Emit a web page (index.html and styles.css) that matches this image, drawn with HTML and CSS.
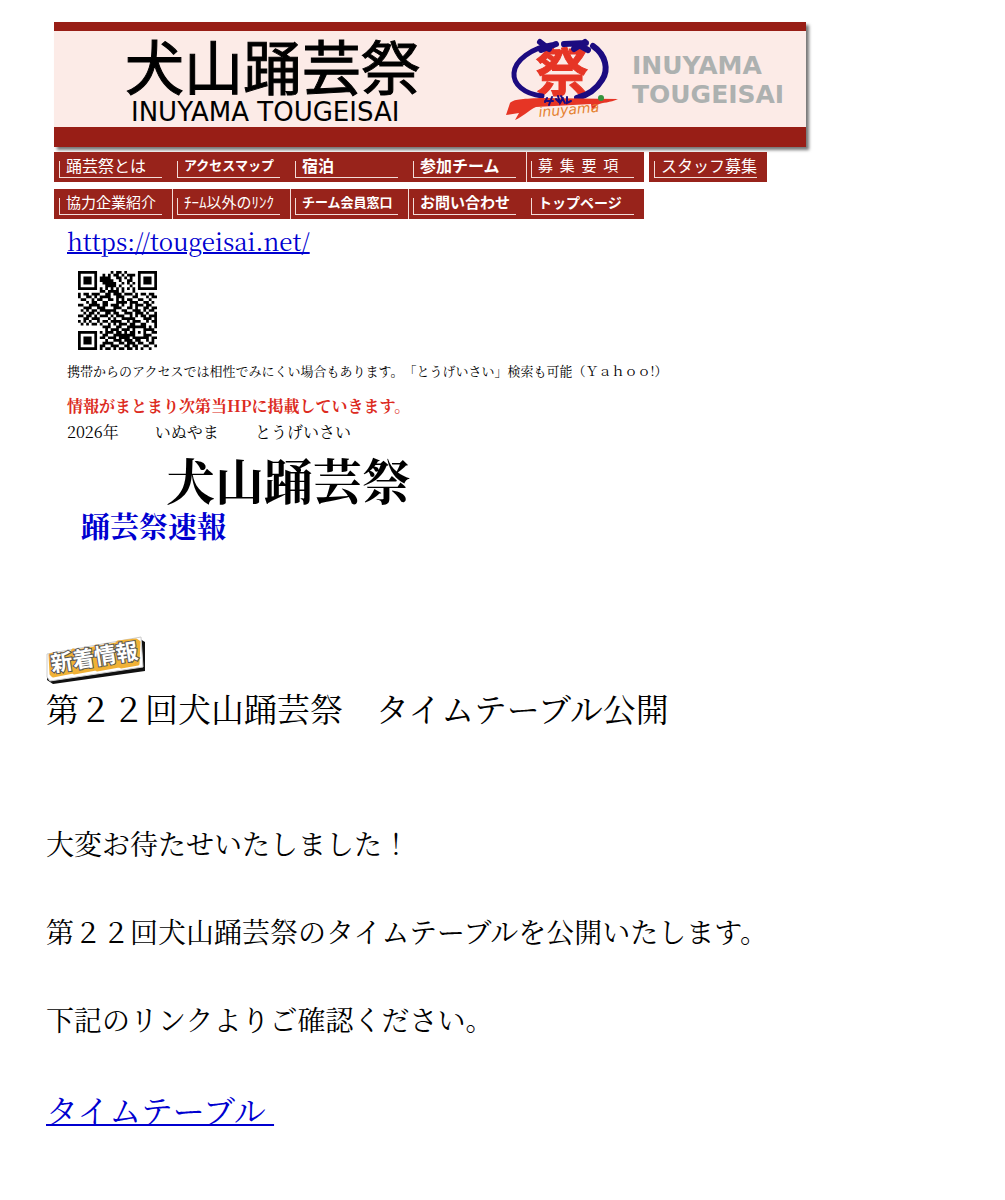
FILE: index.html
```
<!DOCTYPE html>
<html lang="ja">
<head>
<meta charset="utf-8">
<meta name="viewport" content="width=device-width, initial-scale=1">
<title>犬山踊芸祭</title>
<link rel="stylesheet" href="styles.css">
</head>
<body>
<div class="top">
  <header class="banner">
    <div class="brand">
      <span class="brand-name">犬山踊芸祭</span>
      <span class="brand-roman">INUYAMA TOUGEISAI</span>
    </div>
    <svg class="logo" viewBox="0 0 130 94" role="img" aria-label="Inuyama">
      <text class="logo-kanji" x="36" y="60">祭</text>
      <g fill="none" stroke="#1c0b80" stroke-linecap="round" stroke-linejoin="round">
        <path stroke-width="5" d="M51 14C32 17 15 29 14 42C13 53 24 63 42 65"/>
        <path stroke-width="6" d="M93 15C106 24 109 39 102 49C96 59 88 64 77 67"/>
        <path stroke-width="6" d="M40 11L49 18M41 19L56 13M64 13L86 12M85 11L74 18M77 13L88 19"/>
      </g>
      <path fill="#e63525" d="M10 72C14 68 21 68 40 67L118 68C110 72 103 71 97 74L92 80L91 73L36 76C29 79 21 87 15 89L19 82L6 84Z"/>
      <path fill="none" stroke="#1c0b80" stroke-width="2" stroke-linecap="round" d="M45 71L47 67M45 70H53M52 66L49 74M56 68L59 71M58 65L60 72L63 67M61 65L65 72M67 66V72L71 70"/>
      <circle cx="101" cy="67" r="3" fill="#35933d"/>
      <text class="logo-roman" x="39" y="86" transform="rotate(-5 39 86)">inuyama</text>
    </svg>
    <div class="side-name">INUYAMA<br>TOUGEISAI</div>
  </header>
  <nav>
    <ul class="menu">
      <li><a class="s16" href="#about">踊芸祭とは</a></li>
      <li><a class="s13 bold" href="#access">アクセスマップ</a></li>
      <li><a class="s16 bold" href="#stay">宿泊</a></li>
      <li><a class="s16 bold" href="#teams">参加チーム</a></li>
      <li class="ruled"><a class="s15" href="#guide">募  集  要  項</a></li>
      <li class="apart"><a class="s16" href="#staff">スタッフ募集</a></li>
      <li><a class="s15" href="#sponsors">協力企業紹介</a></li>
      <li class="ruled"><a class="s15" href="#links">ﾁｰﾑ以外のﾘﾝｸ</a></li>
      <li class="ruled"><a class="s13 bold" href="#members">チーム会員窓口</a></li>
      <li class="ruled"><a class="s15 bold" href="#contact">お問い合わせ</a></li>
      <li><a class="s14 bold" href="#top">トップページ</a></li>
    </ul>
  </nav>
  <div class="intro">
    <p class="url"><a href="https://tougeisai.net/">https://tougeisai.net/</a></p>
    <svg class="qr" id="qr" viewBox="0 0 29 29" role="img" aria-label="QRコード"></svg>
    <p class="note">携帯からのアクセスでは相性でみにくい場合もあります。「とうげいさい」検索も可能（Ｙａｈｏｏ!）</p>
    <p class="notice">情報がまとまり次第当HPに掲載していきます。</p>
    <p class="reading">2026年　　 いぬやま　　 とうげいさい</p>
    <h1>犬山踊芸祭</h1>
    <h2>踊芸祭速報</h2>
  </div>
</div>
<main class="news">
  <svg class="badge" viewBox="0 0 100 48" role="img" aria-label="新着情報">
    <path fill="#111" d="M3 20L94 3L99 6V35L7 48L1 44Z"/>
    <path fill="#fff" stroke="#ccc" stroke-width="1" d="M1 18L95 1L97 31L4 45L1 41Z"/>
    <path fill="#f0b136" stroke="#f0b136" stroke-width="3" stroke-linejoin="round" d="M4 19L8 18L9 19L26 16L27 14L30 15L48 12L50 10L53 11L70 8L72 6L90 4L93 6L92 28L75 31L73 30L51 34L50 33L28 37L27 36L7 40L5 38Z"/>
    <text x="6" y="36" transform="rotate(-9 6 36)">新着情報</text>
  </svg>
  <h3>第２２回犬山踊芸祭　タイムテーブル公開</h3>
  <p>大変お待たせいたしました！</p>
  <p>第２２回犬山踊芸祭のタイムテーブルを公開いたします。</p>
  <p>下記のリンクよりご確認ください。</p>
  <p class="timetable"><a href="#timetable">タイムテーブル&nbsp;</a></p>
</main>
<script src="qr.js"></script>
</body>
</html>
```
FILE: styles.css
```
* { box-sizing: border-box; }
body {
  margin: 0;
  padding: 22px 46px 62px;
  background: #fff;
  color: #000;
  font-family: "Noto Serif CJK JP", "Liberation Serif", "Noto Sans CJK JP", serif;
  text-spacing-trim: space-all;
}
h1, h2, h3, p, ul { margin: 0; padding: 0; }
a { color: #0000d0; text-decoration-thickness: 2px; }
.top { padding-left: 8px; max-width: 760px; }

.banner {
  display: flex;
  align-items: flex-start;
  height: 125px;
  border-top: 9px solid #981e16;
  border-bottom: 20px solid #981e16;
  background: #fcebe7;
  box-shadow: 3px 3px 3px #777;
}
.brand { display: flex; flex-direction: column; width: 446px; padding: 4px 0 0 71px; }
.brand-name {
  font: 59px/60px "Noto Sans CJK JP", sans-serif;
  -webkit-text-stroke: 1px #000;
}
.brand-roman { padding: 4px 0 0 6px; font: 26px/26px "DejaVu Sans", sans-serif; }
.logo { width: 130px; height: 94px; flex: none; overflow: visible; }
.logo-kanji {
  font: bold 52px "Noto Sans CJK JP", sans-serif;
  fill: #e63525;
  stroke: #e63525;
  stroke-width: 1;
}
.logo-roman { font: italic 14px "DejaVu Sans", sans-serif; fill: #e5812f; }
.side-name {
  padding: 20px 0 0 2px;
  color: #adb1b0;
  font: bold 25px/29px "DejaVu Sans", sans-serif;
}

.menu { display: flex; flex-wrap: wrap; row-gap: 7px; padding-top: 5px; list-style: none; }
.menu li { width: 118px; height: 30px; padding: 4px 10px 4px 5px; background: #98231b; }
.menu .ruled { border-left: 1px solid #f3dcd8; padding-left: 4px; }
.menu .apart { margin-left: 5px; }
.menu a {
  display: block;
  height: 22px;
  padding-left: 7px;
  color: #fff;
  font-family: "Noto Sans CJK JP", sans-serif;
  line-height: 18px;
  text-decoration: none;
  white-space: pre;
  border-bottom: 1px solid #f3dcd8;
  background: linear-gradient(#f3dcd8, #f3dcd8) 0 100% / 1px 16px no-repeat;
}
.menu .s13 { font-size: 13px; }
.menu .s14 { font-size: 14px; }
.menu .s15 { font-size: 15px; }
.menu .s16 { font-size: 16px; }
.bold { font-weight: bold; }

.intro { padding-left: 13px; }
.url { padding-top: 6px; font-size: 24px; line-height: 32px; }
.qr { display: block; width: 79px; height: 79px; margin: 14px 0 11px 11px; }
.note { font-size: 13px; line-height: 20px; }
.notice { margin-top: 12px; color: #dc2a20; font-size: 16px; font-weight: bold; line-height: 26px; }
.reading { font-size: 16px; line-height: 26px; }
h1 { padding: 2px 0 0 99px; font-size: 49px; line-height: 64px; }
h2 { padding-left: 14px; color: #0000d0; font-size: 29px; line-height: 30px; }

.news { padding-top: 95px; }
.badge { display: block; width: 100px; height: 48px; overflow: visible; }
.badge text {
  font: bold 22px "Noto Sans CJK JP", sans-serif;
  fill: #fff;
  stroke: #555;
  stroke-width: 2;
  paint-order: stroke;
}
h3 { margin-bottom: 89px; font-size: 33px; font-weight: normal; line-height: 48px; }
.news p { margin-bottom: 44px; font-size: 28px; line-height: 44px; }
.news .timetable { margin-bottom: 0; font-size: 32px; line-height: 48px; }
```
FILE: qr.js
```
const rows = [
  "11111110000010110100001111111",
  "10000010010101101011101000001",
  "10111010111100110101001011101",
  "10111010111110010011001011101",
  "10111010011111001010101011101",
  "10000010001111010001001000001",
  "11111110101010101010101111111",
  "00000000110111101000100000000",
  "10110111001101110111010110110",
  "10011010111100111000110001011",
  "01100101100110101011001100100",
  "00010110011000111101110011010",
  "11001111011011101001011101100",
  "00111001110001110011010011011",
  "01010110111111001100111010110",
  "00101101001101100111011101001",
  "11011010111010111001010110111",
  "00110111000101001111100011101",
  "10101001011011110010111001011",
  "01010110100101011101100110001",
  "00000000011100110011111110101",
  "00000000001011101110100011110",
  "11111110101110110101101010011",
  "10000010011001111111100011100",
  "10111010110111011110111111011",
  "10111010001001110111011001010",
  "10111010011110011011101100110",
  "10000010110011100110110011001",
  "11111110101101011011010100100"
];
let path = "";
rows.forEach((row, y) => {
  for (const run of row.matchAll(/1+/g)) {
    path += `M${run.index} ${y}h${run[0].length}v1h-${run[0].length}z`;
  }
});
const shape = document.createElementNS("http://www.w3.org/2000/svg", "path");
shape.setAttribute("d", path);
document.getElementById("qr").append(shape);
```
